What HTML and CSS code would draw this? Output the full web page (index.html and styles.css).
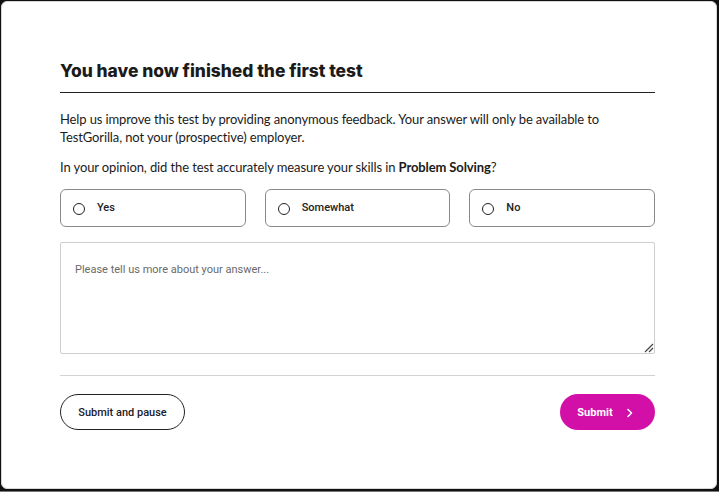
FILE: index.html
```html
<!DOCTYPE html>
<html>
<head>
<meta charset="utf-8">
<link rel="stylesheet" href="styles.css">
</head>
<body>
<div class="frame">
  <div class="card">
    <div class="content">
      <h1 class="title">You have now finished the first test</h1>
      <p class="intro">Help us improve this test by providing anonymous feedback. Your answer will only be available to TestGorilla, not your (prospective) employer.</p>
      <p class="question">In your opinion, did the test accurately measure your skills in <b>Problem Solving</b>?</p>
      <div class="options">
        <label class="option"><span class="radio"></span><span class="opt-label">Yes</span></label>
        <label class="option"><span class="radio"></span><span class="opt-label">Somewhat</span></label>
        <label class="option"><span class="radio"></span><span class="opt-label">No</span></label>
      </div>
      <div class="textarea">
        <span class="placeholder">Please tell us more about your answer...</span>
        <svg class="grip" width="12" height="12" viewBox="0 0 12 12"><path d="M11 3 L3 11 M11 7 L7 11" stroke="#444" stroke-width="1.2" fill="none"/></svg>
      </div>
      <div class="divider"></div>
      <div class="actions">
        <button class="btn btn-outline">Submit and pause</button>
        <button class="btn btn-primary">Submit<svg class="chev" width="8" height="10" viewBox="0 0 8 10"><path d="M2 1.5 L5.5 5 L2 8.5" stroke="#fff" stroke-width="1.6" fill="none" stroke-linecap="round" stroke-linejoin="round"/></svg></button>
      </div>
    </div>
  </div>
</div>
</body>
</html>
```
FILE: styles.css
```css
html, body {
  margin: 0;
  padding: 0;
  background: #111;
}
.frame {
  width: 719px;
  height: 492px;
  box-sizing: border-box;
  padding: 1px 2px 2px 1px;
  background: #111;
  border-bottom: 1px solid #777;
}
.card {
  box-sizing: border-box;
  height: 100%;
  background: #fff;
  border: 1px solid #d6d6d6;
  border-radius: 6px;
  padding: 58px 60px 0 58px;
}
.content {
  width: 595px;
  font-family: Lato, "Liberation Sans", sans-serif;
  color: #1b1b1b;
}
.title {
  margin: 0;
  font-family: Inter, Lato, sans-serif;
  font-size: 17.4px;
  line-height: 22px;
  font-weight: 800;
  letter-spacing: 0;
  padding-bottom: 10px;
  border-bottom: 1px solid #222;
}
.intro {
  margin: 17px 0 0;
  font-size: 13px;
  line-height: 18px;
  letter-spacing: -0.12px;
}
.question {
  margin: 12px 0 0;
  font-size: 13px;
  line-height: 18px;
  letter-spacing: -0.11px;
}
.question b { font-weight: 700; }
.options {
  display: grid;
  grid-template-columns: repeat(3, 1fr);
  gap: 19px;
  margin-top: 13px;
}
.option {
  height: 38px;
  box-sizing: border-box;
  border: 1px solid #8a8a8a;
  border-radius: 6px;
  display: flex;
  align-items: center;
  padding-left: 12px;
}
.radio {
  width: 10px;
  height: 10px;
  border: 1px solid #222;
  border-radius: 50%;
  margin-top: 2px;
}
.opt-label {
  margin-left: 12px;
  font-family: Roboto, "Liberation Sans", sans-serif;
  font-size: 11px;
  font-weight: 500;
  color: #222;
  margin-bottom: 2px;
}
.textarea {
  position: relative;
  margin-top: 15px;
  height: 112px;
  box-sizing: border-box;
  border: 1px solid #cfcfcf;
  border-radius: 2px;
  padding: 14px 14px;
}
.placeholder {
  font-family: Roboto, "Liberation Sans", sans-serif;
  font-size: 11px;
  color: #6a6a6a;
}
.grip {
  position: absolute;
  right: 0;
  bottom: 0;
}
.divider {
  margin-top: 21px;
  height: 1px;
  background: #d2d2d2;
}
.actions {
  display: flex;
  justify-content: space-between;
  margin-top: 18px;
}
.btn {
  height: 36px;
  border-radius: 18px;
  font-family: Roboto, "Liberation Sans", sans-serif;
  font-size: 11px;
  font-weight: 500;
  cursor: pointer;
}
.btn-outline {
  width: 125px;
  background: #fff;
  border: 1px solid #222;
  color: #1b1b2b;
}
.btn-primary {
  width: 95px;
  background: #d20fa7;
  border: none;
  color: #fff;
  font-weight: 700;
  display: flex;
  align-items: center;
  justify-content: center;
  gap: 13px;
  padding-left: 2px;
}
.chev { display: block; margin-top: 1px; }
```
